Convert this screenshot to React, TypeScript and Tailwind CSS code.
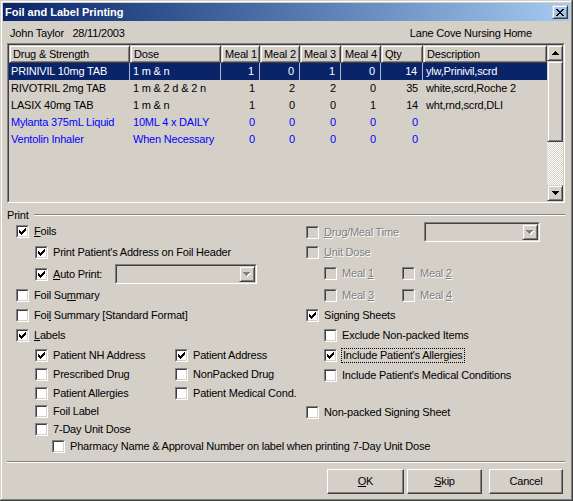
import React from "react";

interface Row {
  drug: string;
  dose: string;
  meals: number[];
  qty: number;
  desc: string;
  blue?: boolean;
}

const rows: Row[] = [
  { drug: "PRINIVIL 10mg TAB", dose: "1 m & n", meals: [1, 0, 1, 0], qty: 14, desc: "ylw,Prinivil,scrd" },
  { drug: "RIVOTRIL 2mg TAB", dose: "1 m & 2 d & 2 n", meals: [1, 2, 2, 0], qty: 35, desc: "white,scrd,Roche 2" },
  { drug: "LASIX 40mg TAB", dose: "1 m & n", meals: [1, 0, 0, 1], qty: 14, desc: "wht,rnd,scrd,DLI" },
  { drug: "Mylanta 375mL Liquid", dose: "10ML 4 x DAILY", meals: [0, 0, 0, 0], qty: 0, desc: "", blue: true },
  { drug: "Ventolin Inhaler", dose: "When Necessary", meals: [0, 0, 0, 0], qty: 0, desc: "", blue: true },
];

const headers = ["Drug & Strength", "Dose", "Meal 1", "Meal 2", "Meal 3", "Meal 4", "Qty", "Description"];
const widths = ["w-[121px]", "w-[91px]", "w-[39px]", "w-[40px]", "w-[41px]", "w-[40px]", "w-[42px]", "w-[124px]"];

const raised =
  "border border-t-[#d4d0c8] border-l-[#d4d0c8] border-b-[#404040] border-r-[#404040] shadow-[inset_1px_1px_#fff,inset_-1px_-1px_#808080]";

function Check() {
  return (
    <svg width="7" height="7" viewBox="0 0 7 7" shapeRendering="crispEdges">
      <path d="M0 2h1v1h1v1h1v-1h1v-1h1v-1h1v-1h1v3h-1v1h-1v1h-1v1h-1v1h-1v-1h-1v-1h-1z" fill="#000" />
    </svg>
  );
}

function Box({ checked, disabled }: { checked?: boolean; disabled?: boolean }) {
  return (
    <span className="flex w-[13px] h-[13px] shrink-0 border border-t-[#808080] border-l-[#808080] border-b-white border-r-white">
      <span
        className={`flex w-full h-full items-center justify-center border border-t-[#404040] border-l-[#404040] border-b-[#d4d0c8] border-r-[#d4d0c8] ${
          disabled ? "bg-[#d4d0c8]" : "bg-white"
        }`}
      >
        {checked && <Check />}
      </span>
    </span>
  );
}

function Cb({
  label,
  checked,
  disabled,
  focused,
  labelWidth,
}: {
  label: React.ReactNode;
  checked?: boolean;
  disabled?: boolean;
  focused?: boolean;
  labelWidth?: string;
}) {
  return (
    <div className="flex items-center">
      <Box checked={checked} disabled={disabled} />
      <span
        className={`whitespace-nowrap leading-[13px] ${labelWidth ?? ""} ${
          disabled ? "text-[#808080] [text-shadow:1px_1px_0_#fff]" : ""
        } ${focused ? "border border-dotted border-black -my-[1px] px-[1px] ml-[4px]" : "ml-[5px]"}`}
      >
        {label}
      </span>
    </div>
  );
}

function Combo({ w }: { w: string }) {
  return (
    <div className={`${w} h-[20px] border border-t-[#808080] border-l-[#808080] border-b-white border-r-white`}>
      <div className="h-full flex justify-end border border-t-[#404040] border-l-[#404040] border-b-[#d4d0c8] border-r-[#d4d0c8] bg-[#d4d0c8]">
        <div className={`w-[16px] h-[16px] flex items-center justify-center ${raised}`}>
          <svg width="8" height="5" viewBox="0 0 8 5" shapeRendering="crispEdges">
            <path d="M1 1h7l-3.5 4z" fill="#fff" />
            <path d="M0 0h7l-3.5 4z" fill="#808080" />
          </svg>
        </div>
      </div>
    </div>
  );
}

function ScrollBtn({ up }: { up?: boolean }) {
  return (
    <div className={`w-[16px] h-[16px] shrink-0 flex items-center justify-center ${raised}`}>
      <svg width="7" height="4" viewBox="0 0 7 4" shapeRendering="crispEdges">
        <path d={up ? "M3 0h1v1h1v1h1v1h1v1h-7v-1h1v-1h1v-1h1z" : "M0 0h7v1h-1v1h-1v1h-1v1h-1v-1h-1v-1h-1v-1h-1z"} fill="#000" />
      </svg>
    </div>
  );
}

function Button({ children, w }: { children: React.ReactNode; w: string }) {
  return (
    <div
      className={`${w} h-[25px] flex items-center justify-center border border-t-white border-l-white border-b-[#404040] border-r-[#404040] shadow-[inset_-1px_-1px_#808080]`}
    >
      {children}
    </div>
  );
}

export default function App() {
  return (
    <div className="w-[573px] h-[501px] bg-[#d4d0c8] p-[3px] flex flex-col text-[11px] tracking-[-0.2px] text-black font-['Liberation_Sans',Arial,sans-serif] shadow-[inset_-1px_-1px_#404040,inset_1px_1px_#d4d0c8,inset_-2px_-2px_#808080,inset_2px_2px_#fff] overflow-hidden">
      {/* title bar */}
      <div className="h-[18px] shrink-0 flex items-center justify-between pl-[2px] pr-[2px] bg-linear-to-r from-[#0a246a] to-[#a6caf0]">
        <span className="text-white font-bold tracking-normal">Foil and Label Printing</span>
        <div className={`w-[16px] h-[14px] flex items-center justify-center ${raised}`}>
          <svg width="8" height="7" viewBox="0 0 8 7" shapeRendering="crispEdges">
            <path d="M0 0h2v1h1v1h2v-1h1v-1h2v1h-1v1h-1v1h-1v1h1v1h1v1h1v1h-2v-1h-1v-1h-2v1h-1v1h-2v-1h1v-1h1v-1h1v-1h-1v-1h-1v-1h-1z" fill="#000" />
          </svg>
        </div>
      </div>

      <div className="flex flex-col pl-[4px] pr-[5px]">
        {/* patient line */}
        <div className="h-[22px] pt-[2px] flex items-center justify-between pl-[3px] pr-[33px]">
          <span className="whitespace-pre">John Taylor   28/11/2003</span>
          <span>Lane Cove Nursing Home</span>
        </div>

        {/* list */}
        <div className="h-[160px] border border-t-[#808080] border-l-[#808080] border-b-white border-r-white">
          <div className="h-full flex border border-t-[#404040] border-l-[#404040] border-b-[#d4d0c8] border-r-[#d4d0c8]">
            <div className="w-[538px] flex flex-col">
              <div className="flex h-[18px]">
                {headers.map((h, i) => (
                  <div key={h} className={`${widths[i]} h-full flex items-center pl-[3px] whitespace-nowrap ${raised}`}>
                    {h}
                  </div>
                ))}
              </div>
              {rows.map((r, ri) => {
                const sel = ri === 0;
                const cells = [r.drug, r.dose, ...r.meals.map(String), String(r.qty), r.desc];
                return (
                  <div
                    key={r.drug}
                    className={`flex h-[17px] ${sel ? "bg-[#0a246a] text-white" : r.blue ? "text-[#0000ff]" : ""}`}
                  >
                    {cells.map((c, i) => (
                      <div
                        key={i}
                        className={`${widths[i]} h-full flex items-center whitespace-nowrap ${
                          i >= 2 && i <= 6 ? "justify-end pr-[5px]" : i === 0 ? "pl-[2px]" : "pl-[3px]"
                        } ${sel && i < 7 ? "border-r border-[#b0b8cc]" : ""}`}
                      >
                        {c}
                      </div>
                    ))}
                  </div>
                );
              })}
            </div>
            <div className="w-[16px] flex flex-col">
              <ScrollBtn up />
              <div className={`h-[81px] shrink-0 ${raised} bg-[#d4d0c8]`} />
              <div className="flex-1 bg-[repeating-conic-gradient(#fff_0_25%,#d4d0c8_0_50%)] bg-[length:2px_2px]" />
              <ScrollBtn />
            </div>
          </div>
        </div>

        {/* Print group header */}
        <div className="mt-[5px] h-[14px] flex items-center">
          <span>Print</span>
          <div className="flex-1 ml-[5px] h-[2px] border-t border-t-[#808080] border-b border-b-white" />
        </div>

        <div className="flex">
          {/* left column */}
          <div className="w-[299px] flex flex-col">
            <div className="h-[19px] pl-[9px] flex items-center">
              <Cb checked label={<><u>F</u>oils</>} />
            </div>
            <div className="h-[22px] pl-[28px] flex items-center">
              <Cb checked label="Print Patient's Address on Foil Header" />
            </div>
            <div className="h-[22px] pl-[28px] flex items-center">
              <Cb checked labelWidth="w-[62px]" label={<><u>A</u>uto Print:</>} />
              <Combo w="w-[142px]" />
            </div>
            <div className="h-[20px] pl-[9px] flex items-center">
              <Cb label={<>Foil Su<u>m</u>mary</>} />
            </div>
            <div className="h-[20px] pl-[9px] flex items-center">
              <Cb label={<>Foi<u>l</u> Summary [Standard Format]</>} />
            </div>
            <div className="h-[20px] pl-[9px] flex items-center">
              <Cb checked label={<><u>L</u>abels</>} />
            </div>
            <div className="h-[20px] pl-[28px] flex items-center">
              <div className="w-[140px]"><Cb checked label="Patient NH Address" /></div>
              <Cb checked label="Patient Address" />
            </div>
            <div className="h-[19px] pl-[28px] flex items-center">
              <div className="w-[140px]"><Cb label="Prescribed Drug" /></div>
              <Cb label="NonPacked Drug" />
            </div>
            <div className="h-[18px] pl-[28px] flex items-center">
              <div className="w-[140px]"><Cb label="Patient Allergies" /></div>
              <Cb label="Patient Medical Cond." />
            </div>
            <div className="h-[18px] pl-[28px] flex items-center">
              <Cb label="Foil Label" />
            </div>
            <div className="h-[19px] pl-[28px] flex items-center">
              <Cb label="7-Day Unit Dose" />
            </div>
            <div className="h-[15px] pl-[45px] flex items-center">
              <Cb label="Pharmacy Name & Approval Number on label when printing 7-Day Unit Dose" />
            </div>
          </div>

          {/* right column */}
          <div className="flex-1 flex flex-col">
            <div className="h-[20px] flex items-center">
              <Cb disabled labelWidth="w-[100px]" label={<><u>D</u>rug/Meal Time</>} />
              <Combo w="w-[116px]" />
            </div>
            <div className="h-[20px] flex items-center">
              <Cb disabled label={<><u>U</u>nit Dose</>} />
            </div>
            <div className="h-[23px] pl-[18px] flex items-center">
              <Cb disabled labelWidth="w-[60px]" label={<>Meal <u>1</u></>} />
              <Cb disabled label={<>Meal <u>2</u></>} />
            </div>
            <div className="h-[20px] pl-[18px] flex items-center">
              <Cb disabled labelWidth="w-[60px]" label={<>Meal <u>3</u></>} />
              <Cb disabled label={<>Meal <u>4</u></>} />
            </div>
            <div className="h-[20px] flex items-center">
              <Cb checked label={<>Si<u>g</u>ning Sheets</>} />
            </div>
            <div className="h-[20px] pl-[18px] flex items-center">
              <Cb label="Exclude Non-packed Items" />
            </div>
            <div className="h-[20px] pl-[18px] flex items-center">
              <Cb checked focused label="Include Patient's Allergies" />
            </div>
            <div className="h-[20px] pl-[18px] flex items-center">
              <Cb label="Include Patient's Medical Conditions" />
            </div>
            <div className="h-[21px] mt-[17px] flex items-center">
              <Cb label="Non-packed Signing Sheet" />
            </div>
          </div>
        </div>

        <div className="mt-[7px] h-[2px] border-t border-t-[#808080] border-b border-b-white" />

        <div className="mt-[6px] flex justify-end pr-[2px]">
          <Button w="w-[77px]"><span><u>O</u>K</span></Button>
          <div className="w-[3px]" />
          <Button w="w-[75px]"><span><u>S</u>kip</span></Button>
          <div className="w-[7px]" />
          <Button w="w-[74px]">Cancel</Button>
        </div>
      </div>
    </div>
  );
}
